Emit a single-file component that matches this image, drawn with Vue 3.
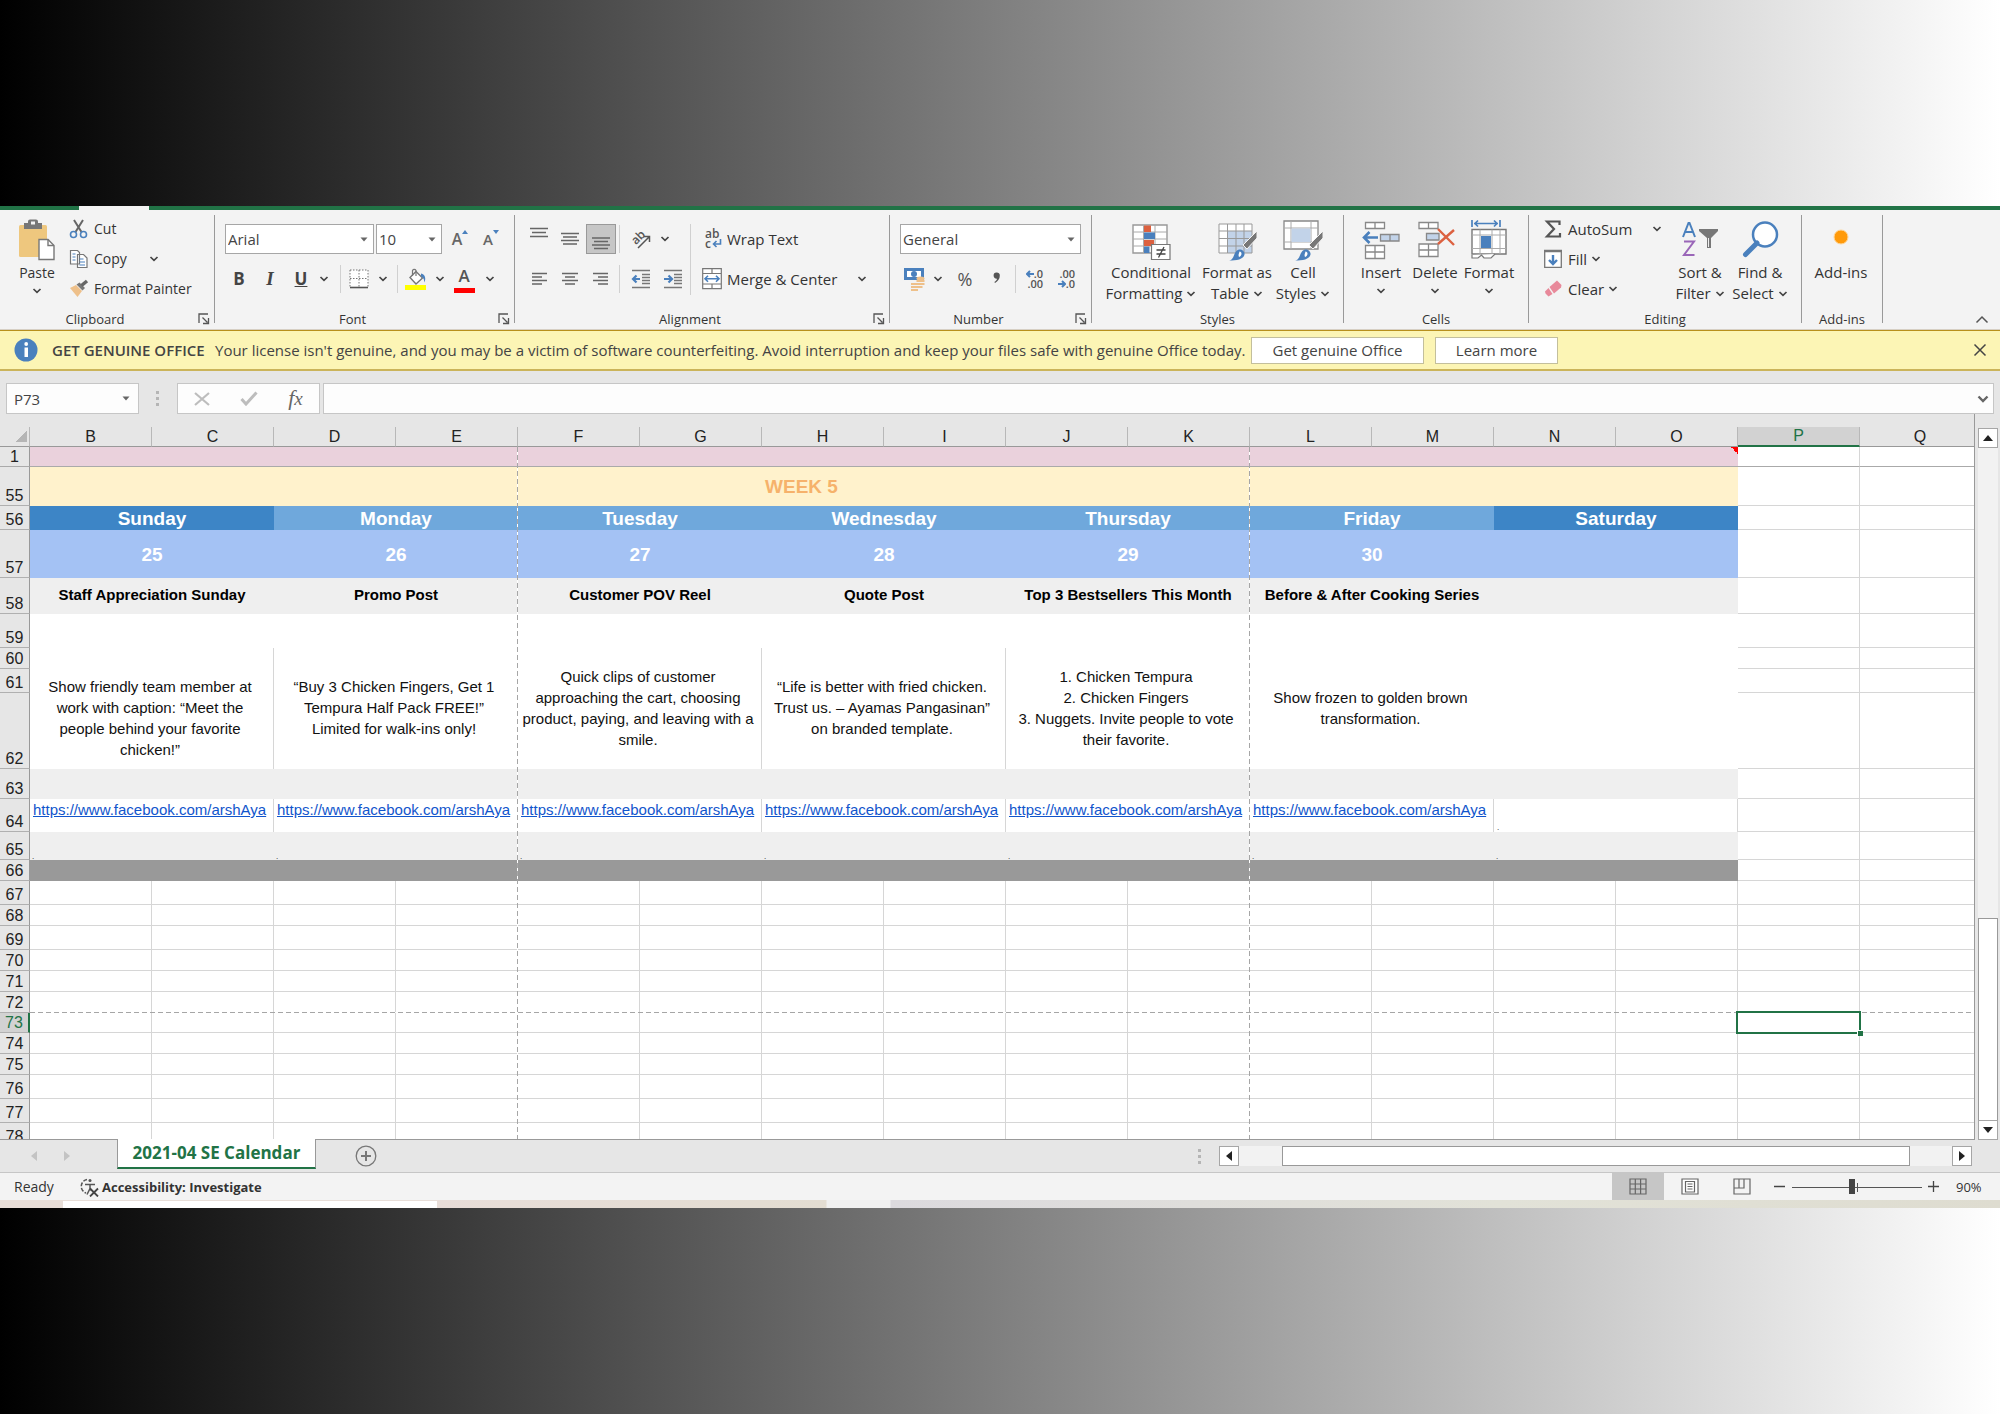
<script setup>
import { h, ref } from 'vue'

const Chevron = () =>
  h('svg', { width: 10, height: 8, viewBox: '0 0 10 8', class: 'chev' }, [
    h('path', { d: 'M1.5 2 5 5.3 8.5 2', fill: 'none', stroke: '#444', 'stroke-width': 1.7 }),
  ])
const Launcher = () =>
  h('svg', { width: 12, height: 12, viewBox: '0 0 12 12' }, [
    h('path', {
      d: 'M1 10V1h9M4.5 4.5l5 5M10.5 5v5.5H5',
      fill: 'none',
      stroke: '#555',
      'stroke-width': 1.3,
    }),
  ])
const Triangle = () =>
  h('svg', { width: 8, height: 5, viewBox: '0 0 8 5', class: 'tri' }, [
    h('path', { d: 'M.5.5h7L4 4.5z', fill: '#666' }),
  ])

const columns = 'BCDEFGHIJKLMNOPQ'.split('')
const zoom = ref(46)
const link = 'https://www.facebook.com/arshAya'

const days = [
  { name: 'Sunday', date: '25', title: 'Staff Appreciation Sunday', text: '\nShow friendly team member at\nwork with caption: “Meet the\npeople behind your favorite\nchicken!”', link },
  { name: 'Monday', date: '26', title: 'Promo Post', text: '“Buy 3 Chicken Fingers, Get 1\nTempura Half Pack FREE!”\nLimited for walk-ins only!', link },
  { name: 'Tuesday', date: '27', title: 'Customer POV Reel', text: 'Quick clips of customer\napproaching the cart, choosing\nproduct, paying, and leaving with a\nsmile.', link },
  { name: 'Wednesday', date: '28', title: 'Quote Post', text: '“Life is better with fried chicken.\nTrust us. – Ayamas Pangasinan”\non branded template.', link },
  { name: 'Thursday', date: '29', title: 'Top 3 Bestsellers This Month', text: '1. Chicken Tempura\n2. Chicken Fingers\n3. Nuggets. Invite people to vote\ntheir favorite.', link },
  { name: 'Friday', date: '30', title: 'Before & After Cooking Series', text: 'Show frozen to golden brown\ntransformation.', link },
  { name: 'Saturday', date: '', title: '', text: '', link: '' },
]

const rows = [
  { n: 1, size: 20, kind: 'pink' },
  { n: 55, size: 39, kind: 'week' },
  { n: 56, size: 24, kind: 'names' },
  { n: 57, size: 48, kind: 'dates' },
  { n: 58, size: 36, kind: 'titles' },
  { n: 59, size: 34, kind: 'blank' },
  { n: 60, size: 21, kind: 'texts' },
  { n: 61, size: 24, kind: 'merged' },
  { n: 62, size: 76, kind: 'merged' },
  { n: 63, size: 30, kind: 'grey' },
  { n: 64, size: 33, kind: 'links' },
  { n: 65, size: 28, kind: 'marks' },
  { n: 66, size: 21, kind: 'dark' },
  ...[24, 21, 24, 21, 21, 21, 20, 21, 21, 24, 24, 24].map((size, i) => ({ n: 67 + i, size, kind: 'empty' })),
]
</script>

<template>
  <div class="page">
    <main class="window">
      <div class="topbar"><span class="tabgap"></span></div>

      <div class="ribbon">
        <section class="group g-clip">
          <div class="body">
            <button class="big paste">
              <svg width="38" height="42" viewBox="0 0 38 42">
                <rect x="1" y="6" width="28" height="32" rx="1.5" fill="#eec77e" />
                <path d="M6 4h4V2.500a2 2 0 0 1 2-2h6a2 2 0 0 1 2 2V4h4v6H6z" fill="#777" />
                <rect x="13" y="2.500" width="4" height="3" fill="#f3f3f3" />
                <path d="M21 20.500h9l6 6V40.500H21z" fill="#fff" stroke="#777" stroke-width="1.400" />
                <path d="M30 20.500v6h6" fill="none" stroke="#777" stroke-width="1.400" />
              </svg>
              <span>Paste</span><Chevron />
            </button>
            <div class="stack">
              <button class="line">
                <svg width="20" height="20" viewBox="0 0 20 20">
                  <path d="M5 1l7.500 12M14 1 6.500 13" stroke="#666" stroke-width="2" fill="none" />
                  <circle cx="4.500" cy="15.500" r="3" fill="none" stroke="#4a80bd" stroke-width="1.600" />
                  <circle cx="14.500" cy="15.500" r="3" fill="none" stroke="#4a80bd" stroke-width="1.600" />
                </svg>Cut
              </button>
              <button class="line">
                <svg width="20" height="20" viewBox="0 0 20 20">
                  <path d="M1.500 1.500h7l2 2V15h-9zM8.500 5.500h6l3.500 3.500v9.500H8.500z" fill="#fff" stroke="#777" stroke-width="1.200" />
                  <path d="M3.500 5h3M3.500 8h3M3.500 11h3M10.500 10h4M10.500 13h5.500M10.500 16h5.500" stroke="#4a80bd" stroke-width="1.200" />
                </svg>Copy<Chevron />
              </button>
              <button class="line">
                <svg width="20" height="20" viewBox="0 0 20 20">
                  <path d="M1 9l6-3 6 6-4.500 6z" fill="#eec08a" />
                  <path d="M7.500 5.500l3-2 5.500 5.500-2.500 2.500z" fill="#777" />
                  <path d="M12.500 6.500 18 2" stroke="#666" stroke-width="3.500" />
                </svg>Format Painter
              </button>
            </div>
          </div>
          <div class="label"><span>Clipboard</span><Launcher /></div>
        </section>
        <div class="sep"></div>

        <section class="group g-font">
          <div class="body rows">
            <div class="row">
              <label class="drop w-face"><select aria-label="Font face"><option>Arial</option></select><Triangle /></label>
              <label class="drop w-size"><select aria-label="Font size"><option>10</option></select><Triangle /></label>
              <button class="w32 grow" aria-label="Increase font size">A<svg width="6" height="4" viewBox="0 0 6 4"><path d="M0 4h6L3 0z" fill="#4a80bd" /></svg></button>
              <button class="w30 grow small" aria-label="Decrease font size">A<svg width="6" height="4" viewBox="0 0 6 4"><path d="M0 0h6L3 4z" fill="#4a80bd" /></svg></button>
            </div>
            <div class="row">
              <button class="w30 glyph"><b>B</b></button>
              <button class="w32 glyph serif"><i>I</i></button>
              <button class="w30 glyph"><u>U</u></button>
              <button class="w16" aria-label="Underline styles"><Chevron /></button>
              <span class="vsep wide"></span>
              <button class="w36" aria-label="Borders">
                <svg width="20" height="20" viewBox="0 0 20 20">
                  <path d="M1 1h18v17H1z" fill="#fff" />
                  <path d="M1 1h18M1 1v17M19 1v17M10 1v17M1 9.500h18" fill="none" stroke="#777" stroke-width="1" stroke-dasharray="1.500 1.500" />
                  <path d="M1 18.500h18" stroke="#555" stroke-width="1.600" />
                </svg>
              </button>
              <button class="w12" aria-label="Border styles"><Chevron /></button>
              <span class="vsep wide"></span>
              <button class="w36" aria-label="Fill color">
                <svg width="22" height="22" viewBox="0 0 22 22">
                  <path d="M5 9.500 11 3.500l6.500 6.500-6.500 6z" fill="#fff" stroke="#777" stroke-width="1.400" />
                  <path d="M11 8V2.500a2 2 0 0 0-3.500 0V8" fill="none" stroke="#777" stroke-width="1.200" />
                  <path d="M16 5.500c4.500 1 5 5 3.500 9-.5-4-1.500-5-3.500-6z" fill="#4a80bd" />
                  <rect x="0" y="17" width="21" height="5" fill="#ff0" />
                </svg>
              </button>
              <button class="w12" aria-label="Fill colors"><Chevron /></button>
              <button class="w36 fontcolor" aria-label="Font color">A</button>
              <button class="w16" aria-label="Font colors"><Chevron /></button>
            </div>
          </div>
          <div class="label"><span>Font</span><Launcher /></div>
        </section>
        <div class="sep"></div>

        <section class="group g-align">
          <div class="body rows2">
            <div class="col">
              <div class="row">
                <button class="w30" aria-label="Top align"><svg width="20" height="24" viewBox="0 0 20 24"><path d="M1 1.500h18M3 5.500h14M1 9.500h18" stroke="#666" stroke-width="1.300" /></svg></button>
                <button class="w32" aria-label="Middle align"><svg width="20" height="24" viewBox="0 0 20 24"><path d="M1 6.500h18M3 10h14M1 13.500h18M3 17h14" stroke="#666" stroke-width="1.300" /></svg></button>
                <button class="w30 on" aria-label="Bottom align"><svg width="20" height="24" viewBox="0 0 20 24"><path d="M1 11h18M3 14.500h14M1 18h18M3 21.500h14" stroke="#666" stroke-width="1.300" /></svg></button>
                <span class="vsep"></span>
                <button class="w36" aria-label="Orientation">
                  <svg width="24" height="24" viewBox="0 0 24 24">
                    <text x="3" y="15" font-size="12" font-weight="600" fill="#555" transform="rotate(-45 9 12)">ab</text>
                    <path d="M9 21 20 10M20.500 15V9.500H15" fill="none" stroke="#555" stroke-width="1.500" />
                  </svg>
                </button>
                <button class="w12" aria-label="Orientation options"><Chevron /></button>
              </div>
              <div class="row">
                <button class="w30" aria-label="Align left"><svg width="16" height="14" viewBox="0 0 16 14"><path d="M1 1.500h15M1 5h10M1 8.500h15M1 12h10" stroke="#666" stroke-width="1.300" /></svg></button>
                <button class="w32" aria-label="Center"><svg width="18" height="14" viewBox="0 0 18 14"><path d="M1 1.500h16M4 5h10M1 8.500h16M4 12h10" stroke="#666" stroke-width="1.300" /></svg></button>
                <button class="w30" aria-label="Align right"><svg width="16" height="14" viewBox="0 0 16 14"><path d="M0 1.500h15M5 5h10M0 8.500h15M5 12h10" stroke="#666" stroke-width="1.300" /></svg></button>
                <span class="vsep"></span>
                <button class="w36" aria-label="Decrease indent">
                  <svg width="20" height="20" viewBox="0 0 20 20"><path d="M1 1.500h18M11 5.500h8M11 8.500h8M11 11.500h8M11 14.500h8M1 18.500h18" stroke="#777" stroke-width="1.300" /><path d="M9 10H2M5.500 6.500 2 10l3.500 3.500" fill="none" stroke="#4a80bd" stroke-width="2.200" /></svg>
                </button>
                <button class="w28" aria-label="Increase indent">
                  <svg width="20" height="20" viewBox="0 0 20 20"><path d="M1 1.500h18M11 5.500h8M11 8.500h8M11 11.500h8M11 14.500h8M1 18.500h18" stroke="#777" stroke-width="1.300" /><path d="M1 10h8M5.500 6.500 9 10l-3.500 3.500" fill="none" stroke="#4a80bd" stroke-width="2.200" /></svg>
                </button>
              </div>
            </div>
            <span class="tallsep"></span>
            <div class="col wide">
              <button class="line">
                <svg width="20" height="24" viewBox="0 0 20 24">
                  <text x="3" y="11" font-size="12" font-weight="600" fill="#555">ab</text>
                  <text x="3" y="21" font-size="12" font-weight="600" fill="#555">c</text>
                  <path d="M18.500 12v5H12M14.500 14 11.500 17l3 3" fill="none" stroke="#4a80bd" stroke-width="1.600" />
                </svg>Wrap Text
              </button>
              <button class="line">
                <svg width="20" height="22" viewBox="0 0 20 22">
                  <path d="M.7.700h18.600v20H.7zM.7 5.500h18.600M.7 16h18.600M10 .7v4.800M10 16v4.700" fill="#fff" stroke="#777" stroke-width="1.200" />
                  <path d="M3 10.700h14M6 7.700l-3 3 3 3M14 7.700l3 3-3 3" fill="none" stroke="#4a80bd" stroke-width="1.600" />
                </svg>Merge &amp; Center<Chevron />
              </button>
            </div>
          </div>
          <div class="label"><span>Alignment</span><Launcher /></div>
        </section>
        <div class="sep"></div>

        <section class="group g-number">
          <div class="body rows">
            <div class="row">
              <label class="drop w-num"><select aria-label="Number format"><option>General</option></select><Triangle /></label>
            </div>
            <div class="row">
              <button class="w28" aria-label="Accounting format">
                <svg width="22" height="24" viewBox="0 0 22 24">
                  <path d="M1 1h20v12H1z" fill="#4a80bd" /><path d="M4 4h14v6H4z" fill="#fff" /><circle cx="11" cy="7" r="3" fill="#4a80bd" />
                  <ellipse cx="17.500" cy="11.500" rx="4" ry="2" fill="#eec08a" /><path d="M13.500 14h8M13.500 17h8M8 17h7M8 20h7M8 23h7M13.500 20h6" stroke="#eec08a" stroke-width="2" />
                </svg>
              </button>
              <button class="w20" aria-label="Accounting options"><Chevron /></button>
              <button class="w34 pct">%</button>
              <button class="w30 comma" aria-label="Comma style">
                <svg width="8" height="12" viewBox="0 0 8 12"><path d="M3.500.5a3 3 0 0 1 3.300 3.300c0 3-1.800 5.500-4.800 7.200l-.6-1c1.500-1 2.400-2 2.600-3.300A3 3 0 0 1 .6 3.600 3 3 0 0 1 3.500.5z" fill="#555" /></svg>
              </button>
              <span class="vsep"></span>
              <button class="w32 dec" aria-label="Increase decimal">
                <span><svg width="8" height="8" viewBox="0 0 8 8"><path d="M8 4H1.500M4 1 1 4l3 3" fill="none" stroke="#4a80bd" stroke-width="2" /></svg>.0</span><span>.00</span>
              </button>
              <button class="w24 dec" aria-label="Decrease decimal">
                <span>.00</span><span><svg width="8" height="8" viewBox="0 0 8 8"><path d="M0 4h6.500M4 1l3 3-3 3" fill="none" stroke="#4a80bd" stroke-width="2" /></svg>.0</span>
              </button>
            </div>
          </div>
          <div class="label"><span>Number</span><Launcher /></div>
        </section>
        <div class="sep"></div>

        <section class="group g-styles">
          <div class="body">
            <button class="big b100">
              <svg width="40" height="42" viewBox="0 0 40 42">
                <path d="M2 6h34v28H2z" fill="#fff" stroke="#999" stroke-width="1.400" />
                <path d="M2 13h34M2 20h34M2 27h34M12.500 6v28M24 6v28" stroke="#aaa" />
                <path d="M13 6.500h7V13h-7zM13 21h10v6H13z" fill="#dc6140" /><path d="M13 13.500h11v6.500H13zM13 27.500h5.500V34H13z" fill="#4a80bd" />
                <path d="M20.500 25.500h18.500v15H20.500z" fill="#fff" stroke="#777" stroke-width="1.200" />
                <path d="M25.500 31h9M25.500 35h9M33 28l-5.500 10.500" stroke="#444" stroke-width="1.300" />
              </svg>
              <span>Conditional</span><span>Formatting <Chevron /></span>
            </button>
            <button class="big b72">
              <svg width="40" height="42" viewBox="0 0 40 42">
                <path d="M2 5h33v29H2z" fill="#fff" /><path d="M11 12h24v22H11z" fill="#c2d3e9" />
                <path d="M2 5h33v29H2zM2 12h33M2 19.500h33M2 27h33M10.500 5v29M19 5v29M27 5v29" fill="none" stroke="#999" />
                <path d="M40 12 26 26l4 4 10-11z" fill="#777" stroke="#f3f3f3" /><path d="M12 41.500c6-1 4-9 10-11 3-.5 6 2 5.500 5-1 5-8 6-15.500 6z" fill="#4a80bd" /><path d="M22.500 32.500c2.500 0 3 4-.5 5.500-1-2 0-3.500.5-5.500z" fill="#fff" />
              </svg>
              <span>Format as</span><span>Table <Chevron /></span>
            </button>
            <button class="big b60">
              <svg width="40" height="42" viewBox="0 0 40 42">
                <path d="M1 2h34v28H1z" fill="#fff" stroke="#888" stroke-width="1.300" />
                <path d="M1 9h34M1 23h34M8 2v28M28 2v28" stroke="#aaa" /><path d="M8.500 9.500h19V23h-19z" fill="#c2d3e9" />
                <path d="M40 12 26 26l4 4 10-11z" fill="#777" stroke="#f3f3f3" /><path d="M12 41.500c6-1 4-9 10-11 3-.5 6 2 5.500 5-1 5-8 6-15.500 6z" fill="#4a80bd" /><path d="M22.500 32.500c2.500 0 3 4-.5 5.500-1-2 0-3.500.5-5.500z" fill="#fff" />
              </svg>
              <span>Cell</span><span>Styles <Chevron /></span>
            </button>
          </div>
          <div class="label"><span>Styles</span></div>
        </section>
        <div class="sep"></div>

        <section class="group g-cells">
          <div class="body">
            <button class="big b54">
              <svg width="40" height="42" viewBox="0 0 40 42">
                <path d="M4.500 3.500h19v6h-19zM14 3.500v6M4.500 26.500h19v13h-19zM14 26.500v13M4.500 33h19" fill="#fff" stroke="#888" stroke-width="1.300" />
                <path d="M19.500 15.500H38v6.500H19.500zM29 15.500V22" fill="#c2d3e9" stroke="#888" stroke-width="1.300" />
                <path d="M17 18.500H3M8.500 13 3 18.500 8.500 24" fill="none" stroke="#4a80bd" stroke-width="2.600" />
              </svg>
              <span>Insert</span><Chevron />
            </button>
            <button class="big b54">
              <svg width="40" height="42" viewBox="0 0 40 42">
                <path d="M4 3.500h19v6H4zM13.500 3.500v6M4 25h19v12.500H4zM13.500 25v12.500M4 31h19" fill="#fff" stroke="#888" stroke-width="1.300" />
                <path d="M11.500 14.500H24v6.500H11.500z" fill="#c2d3e9" stroke="#888" stroke-width="1.300" />
                <path d="M23 10 39 26M39 11 23 25" fill="none" stroke="#dc6140" stroke-width="2.400" />
              </svg>
              <span>Delete</span><Chevron />
            </button>
            <button class="big b54">
              <svg width="40" height="42" viewBox="0 0 40 42">
                <path d="M3 1v7M31 1v7M5 4.500h24M9 1.500 6 4.500l3 3M25 1.500l3 3-3 3" fill="none" stroke="#4a80bd" stroke-width="1.700" />
                <path d="M3 10.500h34V35H3z" fill="#fff" stroke="#777" stroke-width="1.400" /><path d="M3 16h34M3 29.500h34M11 10.500V35M23 10.500V35M31 10.500V35" stroke="#aaa" />
                <path d="M12 17h10v12H12z" fill="#4a80bd" /><path d="M3 36v3h6l3.500-3 2.500 3h7l4-4" fill="#fff" stroke="#777" stroke-width="1.200" />
              </svg>
              <span>Format</span><Chevron />
            </button>
          </div>
          <div class="label"><span>Cells</span></div>
        </section>
        <div class="sep"></div>

        <section class="group g-edit">
          <div class="body">
            <div class="stack">
              <button class="line">
                <svg width="20" height="20" viewBox="0 0 20 20"><path d="M16.500 6V2.500H4l7 7.500-7 7.500h13V14" fill="none" stroke="#555" stroke-width="2.200" /></svg>AutoSum<Chevron />
              </button>
              <button class="line near">
                <svg width="20" height="20" viewBox="0 0 20 20"><path d="M1.700 1.700h16.600v16.600H1.700z" fill="#fff" stroke="#777" stroke-width="1.300" /><path d="M1 2h18" stroke="#777" stroke-width="2.500" /><path d="M10 6v9M6 11l4 4 4-4" fill="none" stroke="#4a80bd" stroke-width="2.400" /></svg>Fill<Chevron />
              </button>
              <button class="line near">
                <svg width="20" height="20" viewBox="0 0 20 20"><path d="M6.500 8 14 1.500 18.500 6l-.5 2.500-7 6z" fill="#e8899a" /><path d="M5.500 9 2 12.500l.5 2 3 3 4-2.500z" fill="#e8899a" /></svg>Clear<Chevron />
              </button>
            </div>
            <button class="big b60">
              <svg width="40" height="42" viewBox="0 0 40 42">
                <path d="M3 18 8.500 4h1L15 18M5 13h8" fill="none" stroke="#4a80bd" stroke-width="2" />
                <path d="M4 22.500h10L4 36h10.500" fill="none" stroke="#9a66b8" stroke-width="2" />
                <path d="M19 10h19v2l-7 7v10h-4V19l-8-7z" fill="#777" /><path d="M28.500 19v9" stroke="#eee" />
              </svg>
              <span>Sort &amp;</span><span>Filter <Chevron /></span>
            </button>
            <button class="big b60">
              <svg width="40" height="42" viewBox="0 0 40 42">
                <circle cx="25" cy="15.500" r="12" fill="#fff" stroke="#4a80bd" stroke-width="2.500" /><path d="M17 24 5.500 35.500" stroke="#4a80bd" stroke-width="5" stroke-linecap="round" />
              </svg>
              <span>Find &amp;</span><span>Select <Chevron /></span>
            </button>
          </div>
          <div class="label"><span>Editing</span></div>
        </section>
        <div class="sep"></div>

        <section class="group g-add">
          <div class="body">
            <button class="big b78">
              <svg width="40" height="42" viewBox="0 0 40 42"><circle cx="20" cy="18" r="7" fill="#ff9a0a" stroke="#ffd79c" /></svg>
              <span>Add-ins</span>
            </button>
          </div>
          <div class="label"><span>Add-ins</span></div>
        </section>
        <div class="sep"></div>
        <button class="collapse" aria-label="Collapse ribbon">
          <svg width="14" height="9" viewBox="0 0 14 9"><path d="M1.500 7.500 7 2l5.500 5.500" fill="none" stroke="#555" stroke-width="1.500" /></svg>
        </button>
      </div>

      <div class="notice">
        <svg width="24" height="24" viewBox="0 0 24 24"><circle cx="12" cy="12" r="11.500" fill="#4a80bd" /><path d="M10.500 9.500h3.500V19h-3.500z" fill="#fff" /><circle cx="12.200" cy="6" r="1.900" fill="#fff" /></svg>
        <strong>GET GENUINE OFFICE</strong>
        <span class="msg">Your license isn't genuine, and you may be a victim of software counterfeiting. Avoid interruption and keep your files safe with genuine Office today.</span>
        <button class="nb get">Get genuine Office</button>
        <button class="nb learn">Learn more</button>
        <button class="close" aria-label="Close"><svg width="14" height="14" viewBox="0 0 14 14"><path d="M1.500 1.500l11 11M12.500 1.500l-11 11" stroke="#444" stroke-width="1.500" /></svg></button>
      </div>

      <div class="formula">
        <label class="drop namebox"><select aria-label="Name box"><option>P73</option></select><Triangle /></label>
        <span class="dots"><i></i><i></i><i></i></span>
        <div class="fxbox">
          <button aria-label="Cancel"><svg width="16" height="14" viewBox="0 0 16 14"><path d="M1 1l14 12M15 1 1 13" stroke="#bdbdbd" stroke-width="2.200" /></svg></button>
          <button aria-label="Enter"><svg width="18" height="15" viewBox="0 0 18 15"><path d="M1.500 8 6 13 16.500 1.500" fill="none" stroke="#bdbdbd" stroke-width="3" /></svg></button>
          <button class="fx"><i>f<small>x</small></i></button>
        </div>
        <div class="inputwrap">
          <input type="text" aria-label="Formula bar" />
          <svg width="12" height="8" viewBox="0 0 12 8"><path d="M1.500 1.500 6 6l4.500-4.500" fill="none" stroke="#666" stroke-width="2.400" /></svg>
        </div>
      </div>

      <div class="sheet">
        <div class="gridwrap">
          <table>
            <colgroup>
              <col class="c-num" />
              <col v-for="c in 15" :key="c" class="c-cell" />
              <col />
            </colgroup>
            <thead>
              <tr>
                <th class="corner"></th>
                <th v-for="c in columns" :key="c" :class="{ active: c === 'P' }">{{ c }}</th>
              </tr>
            </thead>
            <tbody>
              <tr v-for="r in rows" :key="r.n" :class="r.kind" :style="{ height: r.size + 'px' }">
                <th :class="{ active: r.n === 73 }">{{ r.n }}</th>
                <template v-if="r.kind === 'empty'">
                  <td v-for="c in 14" :key="c"></td>
                </template>
                <td v-else-if="r.kind === 'week'" colspan="14">WEEK 5</td>
                <td v-else-if="['pink', 'blank', 'grey', 'dark'].includes(r.kind)" colspan="14"></td>
                <template v-else-if="r.kind === 'texts'">
                  <td v-for="d in days" :key="d.name" colspan="2" rowspan="3">{{ d.text }}</td>
                </template>
                <template v-else-if="r.kind !== 'merged'">
                  <td v-for="d in days" :key="d.name" colspan="2">
                    <template v-if="r.kind === 'names'">{{ d.name }}</template>
                    <template v-else-if="r.kind === 'dates'">{{ d.date }}</template>
                    <template v-else-if="r.kind === 'titles'">{{ d.title }}</template>
                    <template v-else-if="r.kind === 'links'">
                      <a v-if="d.link" :href="d.link">{{ d.link }}</a><span v-else class="mark">.</span>
                    </template>
                    <span v-else class="mark">.</span>
                  </td>
                </template>
                <td class="free" :class="{ selected: r.n === 73 }"></td>
                <td class="free last"></td>
              </tr>
            </tbody>
          </table>
          <span class="vbreak first"></span>
          <span class="vbreak second"></span>
          <span class="hbreak"></span>
        </div>
        <div class="vscroll">
          <button aria-label="Scroll up"><svg width="10" height="6" viewBox="0 0 10 6"><path d="M0 6h10L5 0z" fill="#222" /></svg></button>
          <div class="vtrack"><span class="vthumb"></span></div>
          <button aria-label="Scroll down"><svg width="10" height="6" viewBox="0 0 10 6"><path d="M0 0h10L5 6z" fill="#222" /></svg></button>
        </div>
      </div>

      <div class="tabs">
        <button class="nav" aria-label="Previous sheet"><svg width="6" height="10" viewBox="0 0 6 10"><path d="M6 0v10L0 5z" fill="#c3c3c3" /></svg></button>
        <button class="nav" aria-label="Next sheet"><svg width="6" height="10" viewBox="0 0 6 10"><path d="M0 0v10l6-5z" fill="#c3c3c3" /></svg></button>
        <button class="tab">2021-04 SE Calendar</button>
        <button class="add" aria-label="New sheet"><svg width="22" height="22" viewBox="0 0 22 22"><circle cx="11" cy="11" r="9.800" fill="none" stroke="#777" stroke-width="1.300" /><path d="M11 6v10M6 11h10" stroke="#777" stroke-width="2" /></svg></button>
        <span class="dots"><i></i><i></i><i></i></span>
        <div class="hscroll">
          <button aria-label="Scroll left"><svg width="6" height="10" viewBox="0 0 6 10"><path d="M6 0v10L0 5z" fill="#222" /></svg></button>
          <div class="htrack"><span class="hthumb"></span></div>
          <button aria-label="Scroll right"><svg width="6" height="10" viewBox="0 0 6 10"><path d="M0 0v10l6-5z" fill="#222" /></svg></button>
        </div>
      </div>

      <footer class="status">
        <span class="ready">Ready</span>
        <button class="access">
          <svg width="20" height="20" viewBox="0 0 20 20"><path d="M8 2.500A7 7 0 0 0 7 16" fill="none" stroke="#555" stroke-width="1.500" stroke-dasharray="4 1.500" /><path d="M6 7.500h10M11 7.500v4l-3 6M11 11.500l1.500 2" fill="none" stroke="#555" stroke-width="1.500" /><path d="M11 11.500l8 8M19 11.500l-8 8" stroke="#444" stroke-width="1.800" /><circle cx="11" cy="3.500" r="1.500" fill="#555" /></svg>
          Accessibility: Investigate
        </button>
        <button class="view on" aria-label="Normal view"><svg width="18" height="18" viewBox="0 0 18 18"><path d="M1 1h16v15H1zM1 6h16M1 11h16M6.300 1v15M11.600 1v15" fill="none" stroke="#666" stroke-width="1.200" /></svg></button>
        <button class="view" aria-label="Page layout"><svg width="18" height="18" viewBox="0 0 18 18"><path d="M1 1h16v15H1zM4.500 3.500h9V14h-9z" fill="#fff" stroke="#666" stroke-width="1.200" /><path d="M6.500 6h5M6.500 8.500h5M6.500 11h5" stroke="#666" /></svg></button>
        <button class="view" aria-label="Page break preview"><svg width="18" height="18" viewBox="0 0 18 18"><path d="M1 1h16v15H1zM1 10h10V1M6 1v9" fill="none" stroke="#666" stroke-width="1.200" /></svg></button>
        <button class="zbtn" aria-label="Zoom out"><svg width="11" height="11" viewBox="0 0 11 11"><path d="M0 5.500h11" stroke="#444" stroke-width="1.500" /></svg></button>
        <input v-model="zoom" class="zoom" type="range" min="0" max="100" aria-label="Zoom" />
        <button class="zbtn" aria-label="Zoom in"><svg width="11" height="11" viewBox="0 0 11 11"><path d="M0 5.500h11M5.500 0v11" stroke="#444" stroke-width="1.300" /></svg></button>
        <span class="pct90">90%</span>
      </footer>
      <div class="strip"></div>
    </main>
  </div>
</template>

<style>
body { margin: 0; }
</style>

<style scoped>
* { box-sizing: border-box; }
.page {
  height: 100vh;
  padding: 206px 0;
  background: linear-gradient(90deg, #000, #fff);
}
.window {
  height: 100%;
  display: flex;
  flex-direction: column;
  background: #e6e6e6;
  font: 15px/20px "Open Sans", "Noto Sans", sans-serif;
  color: #333;
}
button, select, input { font: inherit; color: inherit; }
button {
  padding: 0;
  border: 0;
  background: none;
  display: flex;
  align-items: center;
  justify-content: center;
  flex: none;
}
svg { flex: none; display: block; }

.topbar { height: 4px; flex: none; background: #217346; padding-left: 79px; }
.tabgap { display: block; width: 70px; height: 4px; background: #f3f3f3; }

.ribbon { display: flex; height: 120px; flex: none; background: #f3f3f3; border-bottom: 1px solid #d6cfc4; }
.group { display: flex; flex-direction: column; flex: none; }
.sep { width: 1px; margin: 5px 0 6px; background: #999; flex: none; }
.g-clip { width: 214px; }
.g-font { width: 299px; }
.g-align { width: 374px; }
.g-number { width: 201px; }
.g-styles { width: 251px; }
.g-cells { width: 184px; }
.g-edit { width: 272px; }
.g-add { width: 80px; }
.body { flex: 1; display: flex; min-height: 0; }
.label { height: 20px; display: flex; align-items: center; font-size: 13px; }
.label span { flex: 1; text-align: center; }
.label svg { margin: 0 4px 0 8px; }
.g-clip .body { padding-left: 5px; font-size: 14px; }
.g-styles .body { padding-left: 9px; }
.g-cells .body { padding-left: 10px; }
.g-edit .body { padding-left: 14px; }

.big { flex-direction: column; justify-content: flex-start; padding-top: 9px; width: 64px; }
.big > svg:first-child { margin-bottom: 1px; }
.big span { display: flex; align-items: center; white-space: nowrap; line-height: 21px; gap: 4px; }
.big > .chev { margin-top: 4px; }
.b100 { width: 100px; }
.b78 { width: 78px; }
.b72 { width: 72px; }
.b60 { width: 60px; }
.b54 { width: 54px; }
.stack { display: flex; flex-direction: column; padding-top: 4px; width: 127px; }
.stack .line { height: 30px; }
.line { justify-content: flex-start; white-space: nowrap; }
.line > svg:first-child { margin-right: 5px; }
.g-clip .line .chev { margin-left: 22px; }
.line.near .chev { margin-left: 4px; }
.g-edit .line:not(.near) .chev { margin-left: 20px; }

.rows { flex-direction: column; gap: 10px; padding: 14px 0 0 10px; }
.g-font .row + .row { margin-left: -1px; }
.rows2 { padding: 14px 0 0 9px; }
.col { display: flex; flex-direction: column; gap: 10px; }
.col.wide { width: 178px; padding-left: 9px; }
.col .line { height: 30px; width: 100%; }
.col.wide .chev { margin-left: auto; margin-right: 4px; }
.row { display: flex; height: 30px; flex: none; }
.w12 { width: 12px; }
.w16 { width: 16px; }
.w20 { width: 20px; }
.w24 { width: 24px; }
.w28 { width: 28px; }
.w30 { width: 30px; }
.w32 { width: 32px; }
.w34 { width: 34px; }
.w36 { width: 36px; }
.on { background: #c6c6c6; }
.row .on { border: 1px solid #999; }
.vsep { width: 1px; margin: 1px 3px; background: #d0d0d0; }
.vsep.wide { margin: 1px 0 1px 8px; }
.tallsep { width: 1px; height: 71px; margin: 0 2px 0 3px; background: #d0d0d0; }
.glyph { font-size: 17px; color: #444; }
.glyph b, .glyph u { font-weight: 700; }
.serif { font-family: "Liberation Serif", serif; font-size: 19px; font-weight: 700; }
.grow { font-size: 16px; font-weight: 600; color: #666; align-items: center; }
.grow svg { align-self: flex-start; margin-top: 6px; }
.grow.small { font-size: 15px; }
.fontcolor {
  font-size: 17px;
  font-weight: 600;
  color: #555;
  background: linear-gradient(#f00, #f00) 8px 24px / 21px 5px no-repeat;
  padding-bottom: 6px;
}
.pct { font-size: 18px; color: #555; }
.comma { padding-bottom: 2px; }
.dec { flex-direction: column; align-items: flex-end; font-size: 11px; font-weight: 600; line-height: 10px; color: #555; padding-right: 8px; }
.w24.dec { padding-right: 0; }
.dec span { display: flex; align-items: center; }

.drop { display: flex; align-items: center; position: relative; height: 30px; }
.drop select {
  appearance: none;
  width: 100%;
  height: 100%;
  padding: 0 2px;
  border: 1px solid #a6a6a6;
  border-radius: 0;
  background: #fff;
  color: #444;
}
.drop .tri { position: absolute; right: 6px; }
.w-face { width: 149px; margin-right: 2px; }
.w-size { width: 66px; margin-right: 2px; }
.w-num { width: 181px; }
.collapse { margin: auto 11px 5px auto; }

.notice {
  display: flex;
  align-items: center;
  height: 41px;
  flex: none;
  padding: 0 13px 0 14px;
  background: #fcf5b5;
  border-top: 1px solid #b8901c;
  border-bottom: 2px solid #cbb45a;
  color: #444;
}
.notice strong { margin-left: 14px; width: 163px; font-weight: 600; white-space: nowrap; }
.msg { width: 1036px; white-space: nowrap; }
.nb { height: 27px; background: #fff; border: 1px solid #c3bf9c; }
.get { width: 173px; margin-right: 11px; }
.learn { width: 123px; }
.close { margin-left: auto; }

.formula { display: flex; align-items: center; flex: none; height: 43px; padding: 12px 6px 0; }
.formula > * { height: 31px; }
.namebox { width: 133px; }
.namebox select, .fxbox, .inputwrap input { background: #fdfdfd; border: 1px solid #c6c6c6; height: 31px; }
.namebox select { padding-left: 7px; }
.namebox .tri { right: 9px; }
.dots { display: flex; flex-direction: column; justify-content: center; gap: 3px; width: 4px; }
.dots i { width: 3px; height: 3px; background: #b5b5b5; }
.formula .dots { margin: 0 17px; }
.fxbox { display: flex; width: 143px; margin-right: 3px; }
.fxbox button { flex: 1; }
.fx { font: 700 22px/24px "Liberation Serif", serif; color: #666; }
.fx i { font-weight: 400; }
.fx small { font-size: 19px; }
.inputwrap { flex: 1; display: flex; align-items: center; position: relative; }
.inputwrap input { width: 100%; border-radius: 0; padding: 0 24px 0 4px; }
.inputwrap svg { position: absolute; right: 5px; }

.sheet { flex: 1; display: flex; min-height: 0; }
.gridwrap { flex: 1; position: relative; overflow: hidden; padding-top: 13px; border-right: 1px solid #999; border-bottom: 1px solid #999; }
table {
  width: 100%;
  table-layout: fixed;
  border-collapse: separate;
  border-spacing: 0;
  background: #fff;
  font: 15px/21px "Liberation Sans", Arial, sans-serif;
  color: #111;
}
.c-num { width: 30px; }
.c-cell { width: 122px; }
th { padding: 0; font-weight: 400; font-size: 16px; line-height: 19px; color: #222; background: #e6e6e6; }
thead th { height: 20px; border-bottom: 1px solid #999; border-right: 1px solid #b8b8b8; }
thead th:last-child { padding-left: 6px; border-right: 0; }
thead th.active { background: #d2d2d2; color: #217346; border-bottom: 2px solid #217346; line-height: 18px; }
.corner { background: linear-gradient(135deg, transparent 50%, #b5b5b5 50%) 16px 4px / 11px 11px no-repeat #e6e6e6; }
tbody th { border-right: 1px solid #999; border-bottom: 1px solid #b0b0b0; vertical-align: bottom; }
tbody th.active { background: #d2d2d2; color: #217346; border-right: 2px solid #217346; }
td { padding: 0; text-align: center; vertical-align: middle; overflow: hidden; }
.empty td, td.free { border-right: 1px solid #d6d6d6; border-bottom: 1px solid #d6d6d6; }
tr td.last { border-right: 0; }
.pink td, .pink th { border-bottom: 1px solid #aaa; }
.pink td:not(.free) {
  background: linear-gradient(45deg, transparent 50%, #f00 50%) right top / 7px 7px no-repeat #ead1dc;
}
.week td:not(.free) { background: #fff2cc; color: #f6b26b; font-size: 19px; font-weight: 700; padding-right: 165px; }
.names td:not(.free) { background: #6fa8dc; color: #fff; font-size: 19px; font-weight: 700; }
.names th + td:not(.free), .names td:nth-child(8) { background: #3d85c6 !important; }
.dates td:not(.free) { background: #a4c2f4; color: #fff; font-size: 19px; font-weight: 700; }
.titles td:not(.free) { background: #efefef; color: #000; font-weight: 700; white-space: nowrap; padding-bottom: 3px; }
.texts td:not(.free) { white-space: pre-line; border-right: 1px solid #d6d6d6; padding: 0 3px 2px 0; }
.texts td:nth-child(7), .texts td:nth-child(8) { border-right: 0 !important; }
.grey td:not(.free), .marks td:not(.free) { background: #efefef; }
.dark td:not(.free) { background: #999; }
.links td:not(.free) { text-align: left; vertical-align: top; white-space: nowrap; border-right: 1px solid #d6d6d6; padding-left: 3px; }
.links a { color: #1155cc; text-decoration: underline; }
.marks td:not(.free) { text-align: left; vertical-align: bottom; padding-left: 2px; }
.mark { display: block; font-size: 8px; line-height: 6px; }
.links td .mark { margin-top: 26px; }
td.selected { position: relative; overflow: visible; }
td.selected::before { content: ""; position: absolute; inset: -2px; border: 2px solid #217346; z-index: 2; }
td.selected::after { content: ""; position: absolute; right: -4px; bottom: -4px; width: 5px; height: 5px; background: #217346; border: 1px solid #fff; border-width: 1px 0 0 1px; box-sizing: content-box; z-index: 3; }
.vbreak { position: absolute; top: 33px; bottom: 0; width: 1px; background: repeating-linear-gradient(#a6a6a6 0 5px, #fff 5px 8px); }
.vbreak.first { left: 517px; }
.vbreak.second { left: 1249px; }
.hbreak { position: absolute; top: 598px; left: 30px; right: 0; height: 1px; background: repeating-linear-gradient(90deg, #a6a6a6 0 5px, #fff 5px 8px); }

.vscroll { display: flex; flex-direction: column; width: 20px; margin: 14px 2px 0 3px; }
.vscroll button, .hscroll button { width: 20px; height: 20px; background: #fff; border: 1px solid #a6a6a6; }
.vtrack { flex: 1; display: flex; flex-direction: column; justify-content: flex-end; background: #f2f2f2; }
.vthumb { height: 30%; background: #fff; border: 1px solid #999; border-bottom: 0; }

.tabs { display: flex; align-items: center; height: 33px; flex: none; padding: 0 28px 0 31px; border-bottom: 1px solid #c6c6c6; }
.nav { width: 6px; margin-right: 27px; }
.nav + .nav { margin-right: 47px; }
.tab { align-self: flex-start; width: 199px; height: 30px; margin-top: -1px; position: relative; background: #fff; border: 1px solid #999; border-width: 0 1px 2px; border-bottom-color: #217346; color: #217346; font-size: 17px; font-weight: 700; white-space: nowrap; }
.add { margin-left: 39px; }
.tabs .dots { margin-left: auto; margin-right: 17px; }
.hscroll { display: flex; width: 753px; }
.htrack { flex: 1; background: #f2f2f2; padding: 0 42px 0 43px; }
.hthumb { display: block; height: 20px; background: #fff; border: 1px solid #999; }

.status { display: flex; align-items: center; height: 27px; flex: none; background: #f3f3f3; font-size: 13px; }
.ready { margin-left: 14px; width: 65px; font-size: 14px; }
.access { font-weight: 700; gap: 3px; margin-right: auto; }
.view { width: 52px; height: 27px; }
.zbtn { width: 11px; margin: 0 7px 0 6px; }
.zoom { appearance: none; width: 130px; height: 16px; margin: 0; background: linear-gradient(#555, #555) 0 8px / 100% 1px no-repeat, linear-gradient(#555, #555) 65px 4px / 1px 9px no-repeat; }
.zoom::-webkit-slider-thumb { appearance: none; width: 6px; height: 15px; background: #444; border: 0; border-radius: 0; }
.zoom + .zbtn { margin: 0 17px 0 6px; }
.pct90 { width: 44px; }
.strip { height: 8px; flex: none; background: linear-gradient(#fff, #fff) 63px 1px / 374px 7px no-repeat, linear-gradient(90deg, #e8ded8 0 437px, #e8ddd8 437px, #e3ddd2 826px, #f0f0f0 827px 890px, #dcdade 891px, #e2e2d8 75%, #dedcd0); }
</style>
